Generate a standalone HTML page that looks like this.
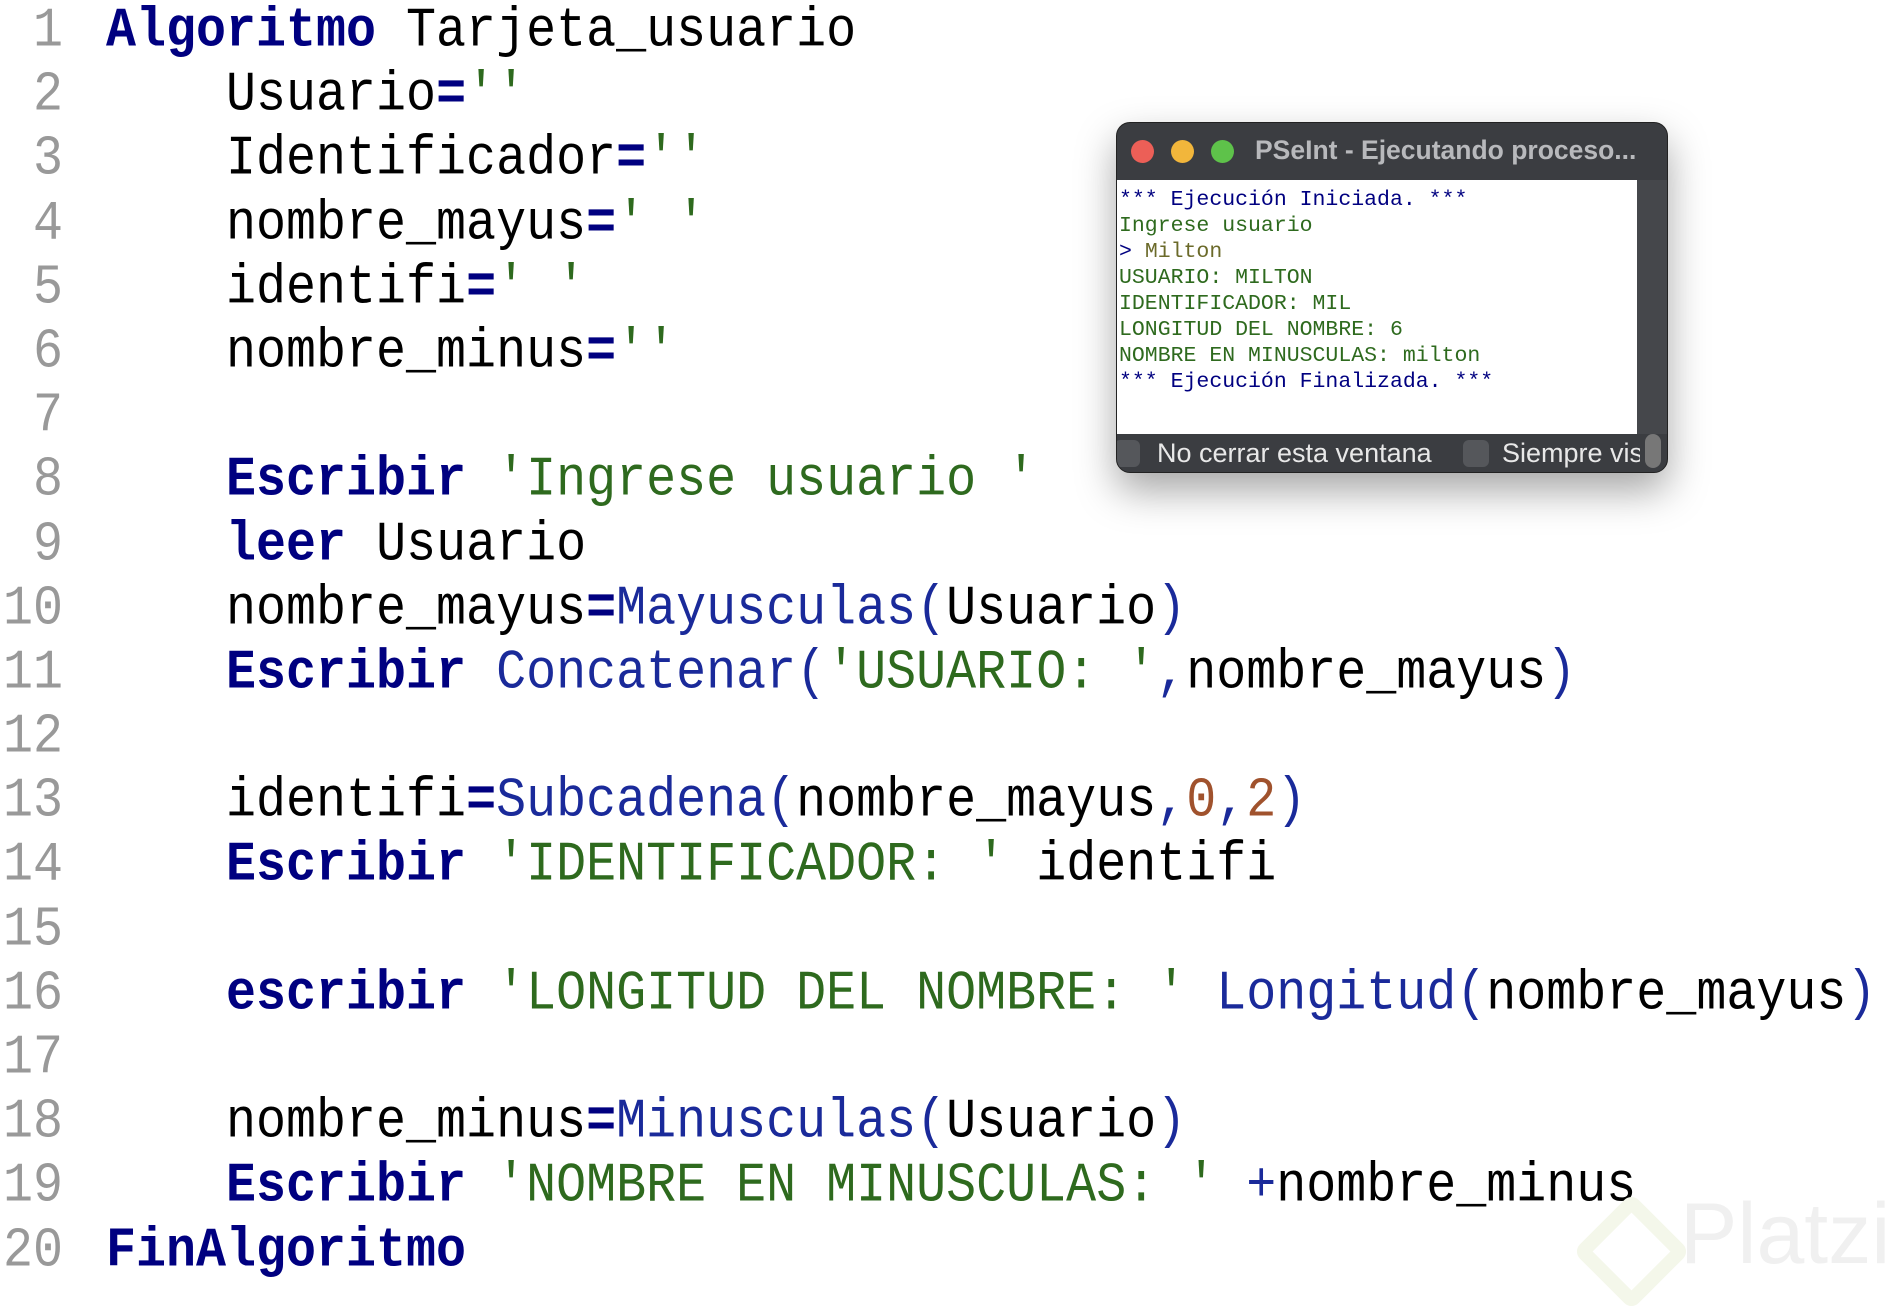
<!DOCTYPE html>
<html><head><meta charset="utf-8"><style>
body{margin:0;width:1902px;height:1290px;background:#fff;position:relative;overflow:hidden;font-family:"Liberation Mono",monospace;}
.code{position:absolute;left:0;top:0px;}
.l{position:relative;height:64.2px;line-height:64.2px;font-size:50px;white-space:pre;color:#000;transform:scaleY(1.12);}
.n{position:absolute;left:0;width:63px;text-align:right;color:#999;}
.t{position:absolute;left:106px;}
.k{color:#000080;font-weight:bold}
.f{color:#1a2a9a}
.s{color:#2e6a1e}
.o{color:#000080;font-weight:bold}
.d{color:#a0522d}
.win{position:absolute;left:1116px;top:122px;width:552px;height:351px;background:#3b3d41;border-radius:14px;box-shadow:0 18px 40px rgba(0,0,0,.35);overflow:hidden;border:1px solid #222;box-sizing:border-box}
.tb{height:57px;position:relative}
.dot{position:absolute;top:17px;width:23px;height:23px;border-radius:50%}
.title{position:absolute;left:138px;top:12px;font:bold 26.5px "Liberation Sans",sans-serif;color:#b8b9bc;white-space:nowrap}
.con{position:absolute;left:0;top:57px;width:520px;height:254px;background:#fff;padding:7px 2px;box-sizing:border-box;font-size:21.5px;line-height:26px;white-space:pre}
.sb{position:absolute;left:520px;top:57px;width:32px;height:254px;background:#45474b}
.bot{position:absolute;left:0;top:311px;width:552px;height:40px;font:27px "Liberation Sans",sans-serif;color:#e8e8e8}
.cb{position:absolute;top:6px;width:26px;height:27px;border-radius:6px;background:#55575b}
</style></head><body>
<div class="code">
<div class="l"><span class="n">1</span><span class="t"><span class="k">Algoritmo</span> Tarjeta_usuario</span></div>
<div class="l"><span class="n">2</span><span class="t">    Usuario<span class="o">=</span><span class="s">''</span></span></div>
<div class="l"><span class="n">3</span><span class="t">    Identificador<span class="o">=</span><span class="s">''</span></span></div>
<div class="l"><span class="n">4</span><span class="t">    nombre_mayus<span class="o">=</span><span class="s">' '</span></span></div>
<div class="l"><span class="n">5</span><span class="t">    identifi<span class="o">=</span><span class="s">' '</span></span></div>
<div class="l"><span class="n">6</span><span class="t">    nombre_minus<span class="o">=</span><span class="s">''</span></span></div>
<div class="l"><span class="n">7</span></div>
<div class="l"><span class="n">8</span><span class="t">    <span class="k">Escribir</span> <span class="s">'Ingrese usuario '</span></span></div>
<div class="l"><span class="n">9</span><span class="t">    <span class="k">leer</span> Usuario</span></div>
<div class="l"><span class="n">10</span><span class="t">    nombre_mayus<span class="o">=</span><span class="f">Mayusculas(</span>Usuario<span class="f">)</span></span></div>
<div class="l"><span class="n">11</span><span class="t">    <span class="k">Escribir</span> <span class="f">Concatenar(</span><span class="s">'USUARIO: '</span><span class="f">,</span>nombre_mayus<span class="f">)</span></span></div>
<div class="l"><span class="n">12</span></div>
<div class="l"><span class="n">13</span><span class="t">    identifi<span class="o">=</span><span class="f">Subcadena(</span>nombre_mayus<span class="f">,</span><span class="d">0</span><span class="f">,</span><span class="d">2</span><span class="f">)</span></span></div>
<div class="l"><span class="n">14</span><span class="t">    <span class="k">Escribir</span> <span class="s">'IDENTIFICADOR: '</span> identifi</span></div>
<div class="l"><span class="n">15</span></div>
<div class="l"><span class="n">16</span><span class="t">    <span class="k">escribir</span> <span class="s">'LONGITUD DEL NOMBRE: '</span> <span class="f">Longitud(</span>nombre_mayus<span class="f">)</span></span></div>
<div class="l"><span class="n">17</span></div>
<div class="l"><span class="n">18</span><span class="t">    nombre_minus<span class="o">=</span><span class="f">Minusculas(</span>Usuario<span class="f">)</span></span></div>
<div class="l"><span class="n">19</span><span class="t">    <span class="k">Escribir</span> <span class="s">'NOMBRE EN MINUSCULAS: '</span> <span class="f">+</span>nombre_minus</span></div>
<div class="l"><span class="n">20</span><span class="t"><span class="k">FinAlgoritmo</span></span></div>
</div>
<div style="position:absolute;left:1680px;top:1185px;font:86px 'Liberation Sans',sans-serif;color:#f0f0f0">Platzi</div>
<div style="position:absolute;left:1590px;top:1210px;width:55px;height:55px;border:14px solid #f4f7ea;border-radius:10px;transform:rotate(45deg)"></div>
<div class="win">
<div class="tb"><div class="dot" style="left:14px;background:#ec5f57"></div><div class="dot" style="left:54px;background:#f2b63b"></div><div class="dot" style="left:94px;background:#5ec24a"></div><div class="title">PSeInt - Ejecutando proceso...</div></div>
<div class="con"><span style="color:#000080">*** Ejecución Iniciada. ***</span>
<span style="color:#2e6a1e">Ingrese usuario</span>
<span style="color:#000080">&gt; </span><span style="color:#6b6a2a">Milton</span>
<span style="color:#2e6a1e">USUARIO: MILTON
IDENTIFICADOR: MIL
LONGITUD DEL NOMBRE: 6
NOMBRE EN MINUSCULAS: milton</span>
<span style="color:#000080">*** Ejecución Finalizada. ***</span></div>
<div class="sb"></div>
<div class="bot"><div class="cb" style="left:-3px"></div><span style="position:absolute;left:40px;top:4px;white-space:nowrap">No cerrar esta ventana</span><div class="cb" style="left:346px"></div><span style="position:absolute;left:385px;top:4px;width:138px;overflow:hidden;white-space:nowrap">Siempre visible</span><div style="position:absolute;left:528px;top:0;width:16px;height:34px;border-radius:8px;background:#777"></div></div>
</div>
</body></html>
